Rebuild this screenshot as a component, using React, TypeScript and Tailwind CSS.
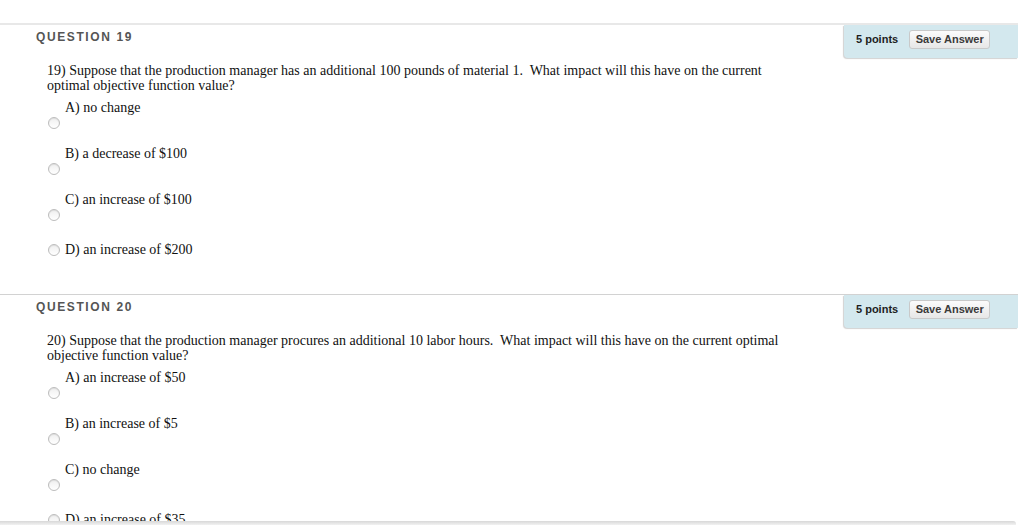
import React from "react";

type Option = { label: string; inline?: boolean };

type QuestionProps = {
  title: string;
  text: string;
  options: Option[];
  first?: boolean;
};

const Radio = () => (
  <span className="block w-[12px] h-[12px] rounded-full border border-[#bdbdbd] bg-linear-to-b from-[#efefef] to-white shadow-[inset_0_1px_1px_rgba(0,0,0,0.08)]" />
);

const Question = ({ title, text, options, first }: QuestionProps) => {
  return (
    <section
      className={
        first
          ? "flex border-t-2 border-[#e8e8e8]"
          : "flex border-t border-[#d2d2d2]"
      }
    >
      <div className="flex-1 pl-[36px] pb-[37px]">
        <h3 className="pt-[5px] font-['Liberation_Sans',Arial,sans-serif] font-bold text-[12px] leading-[14px] tracking-[1.6px] text-[#555]">
          {title}
        </h3>
        <p className="mt-[19px] pl-[11px] w-[756px] text-[14px] leading-[15px] text-[#111]">
          {text}
        </p>
        <ul className="mt-[7px]">
          {options.map((opt, idx) =>
            opt.inline ? (
              <li key={idx} className="mt-[21px] flex items-center h-[15px] pl-[12px]">
                <Radio />
                <span className="ml-[5px] text-[14px] leading-[15px] text-[#111]">
                  {opt.label}
                </span>
              </li>
            ) : (
              <li key={idx} className={idx === 0 ? "" : "mt-[17px]"}>
                <div className="pl-[29px] text-[14px] leading-[15px] text-[#111]">
                  {opt.label}
                </div>
                <div className="mt-[2px] pl-[12px]">
                  <Radio />
                </div>
              </li>
            )
          )}
        </ul>
      </div>
      <div className="w-[174px] h-[33px] flex items-start pt-[5px] pl-[12px] bg-[#d3e8ee] rounded-bl-[4px] shadow-[-1px_1px_1px_rgba(0,0,0,0.18)] font-['Liberation_Sans',Arial,sans-serif]">
        <div className="flex items-center h-[19px]">
          <span className="text-[11px] font-bold text-[#1e1e1e]">5 points</span>
          <button className="ml-[11px] w-[81px] h-[19px] border border-[#c9c9c9] rounded-[3px] bg-linear-to-b from-[#fbfbfb] to-[#e7e7e7] text-[11px] font-bold text-[#3a3a3a] leading-none">
            Save Answer
          </button>
        </div>
      </div>
    </section>
  );
};

const App = () => {
  return (
    <div className="relative w-[1024px] h-[525px] overflow-hidden bg-white font-['Liberation_Serif','Times_New_Roman',serif]">
      <div className="pt-[23px] w-[1018px]">
        <Question
          first
          title="QUESTION 19"
          text={
            "19) Suppose that the production manager has an additional 100 pounds of material 1.\u00a0 What impact will this have on the current optimal objective function value?"
          }
          options={[
            { label: "A) no change" },
            { label: "B) a decrease of $100" },
            { label: "C) an increase of $100" },
            { label: "D) an increase of $200", inline: true },
          ]}
        />
        <Question
          title="QUESTION 20"
          text={
            "20) Suppose that the production manager procures an additional 10 labor hours.\u00a0 What impact will this have on the current optimal objective function value?"
          }
          options={[
            { label: "A) an increase of $50" },
            { label: "B) an increase of $5" },
            { label: "C) no change" },
            { label: "D) an increase of $35", inline: true },
          ]}
        />
      </div>
      <div className="absolute left-0 bottom-0 w-[1016px] h-[4px] rounded-tr-[3px] bg-linear-to-b from-[#d8d8d8] to-[#f2f2f2]" />
    </div>
  );
};

export default App;
